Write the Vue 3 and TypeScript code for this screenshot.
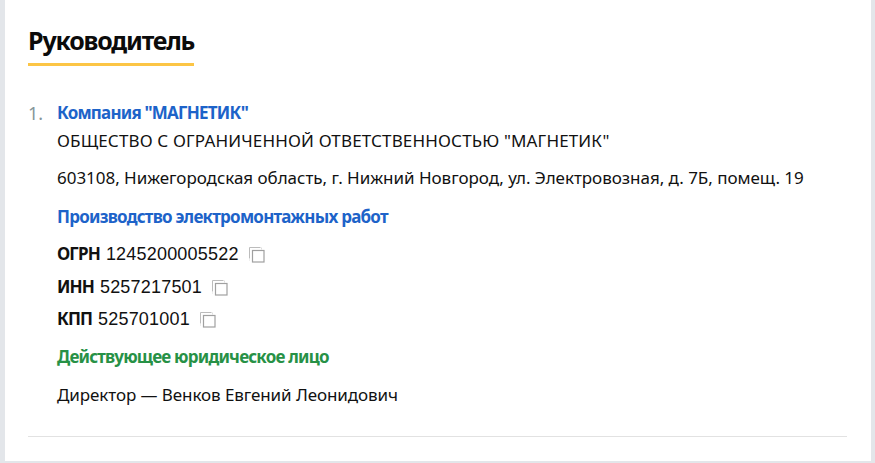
<script setup lang="ts">
interface Requisite {
  label: string
  value: string
}

const requisites: Requisite[] = [
  { label: 'ОГРН', value: '1245200005522' },
  { label: 'ИНН', value: '5257217501' },
  { label: 'КПП', value: '525701001' }
]
</script>

<template>
  <div class="page">
    <section class="panel">
      <h2 class="title">Руководитель</h2>
      <div class="person">
        <span class="num">1.</span>
        <div class="body">
          <a class="link name">Компания "МАГНЕТИК"</a>
          <div class="full">ОБЩЕСТВО С ОГРАНИЧЕННОЙ ОТВЕТСТВЕННОСТЬЮ "МАГНЕТИК"</div>
          <div class="address">603108, Нижегородская область, г. Нижний Новгород, ул. Электровозная, д. 7Б, помещ. 19</div>
          <a class="link activity">Производство электромонтажных работ</a>
          <div class="reqs">
            <div v-for="r in requisites" :key="r.label" class="req">
              <b>{{ r.label }}</b>
              <span class="val">{{ r.value }}</span>
              <svg class="copy" width="16" height="16" viewBox="0 0 16 16" fill="none">
                <path d="M11.5 .5H.5V11.5" stroke="#bcbcbc" />
                <path d="M12.5 .5V2.5M.5 12.5V13.5" stroke="#dedede" />
                <rect x="3.5" y="3.5" width="11.5" height="11.5" stroke="#a0a0a0" stroke-width="1.2" />
              </svg>
            </div>
          </div>
          <div class="status">Действующее юридическое лицо</div>
          <div class="director">Директор — Венков Евгений Леонидович</div>
        </div>
      </div>
    </section>
  </div>
</template>

<style>
html,
body {
  margin: 0;
  background: #e3e6ea;
}
</style>

<style scoped>
.page {
  width: 875px;
  height: 463px;
  overflow: hidden;
  padding: 0 4px 2px 5px;
  box-sizing: border-box;
  font-family: "Noto Sans", "Open Sans", sans-serif;
  color: #111;
}

.panel {
  height: 100%;
  background: #fff;
  padding: 0 24px 0 23px;
  box-sizing: border-box;
  display: flex;
  flex-direction: column;
}

.title {
  align-self: flex-start;
  margin: 25px 0 0;
  padding-bottom: 8px;
  border-bottom: 3px solid #fcc545;
  font-size: 25px;
  line-height: 30px;
  font-weight: 700;
  letter-spacing: -1.2px;
  color: #0b0b0b;
}

.person {
  display: flex;
  margin-top: 35px;
  padding-bottom: 29px;
  border-bottom: 1px solid #e2e2e2;
}

.num {
  width: 29px;
  flex: none;
  font-size: 18px;
  line-height: 24px;
  color: #86969a;
}

.body {
  display: flex;
  flex-direction: column;
  align-items: flex-start;
  font-size: 17px;
  line-height: 24px;
}

.link {
  color: #1d63c9;
  font-weight: 700;
  letter-spacing: -0.8px;
}

.full {
  margin-top: 4px;
  letter-spacing: 0.15px;
}

.address {
  margin-top: 13px;
  letter-spacing: -0.03px;
}

.activity {
  margin-top: 15px;
  letter-spacing: -0.77px;
}

.reqs {
  margin-top: 9px;
}

.req {
  display: flex;
  align-items: center;
  height: 32.5px;
}

.req b {
  letter-spacing: -0.9px;
}

.val {
  margin-left: 6px;
  font-family: "Liberation Sans", sans-serif;
  font-size: 18px;
  letter-spacing: 0.2px;
}

.copy {
  margin-left: 10px;
  margin-top: 2px;
}

.status {
  margin-top: 9px;
  color: #279146;
  font-weight: 700;
  letter-spacing: -0.8px;
}

.director {
  margin-top: 14px;
  letter-spacing: -0.08px;
}
</style>
